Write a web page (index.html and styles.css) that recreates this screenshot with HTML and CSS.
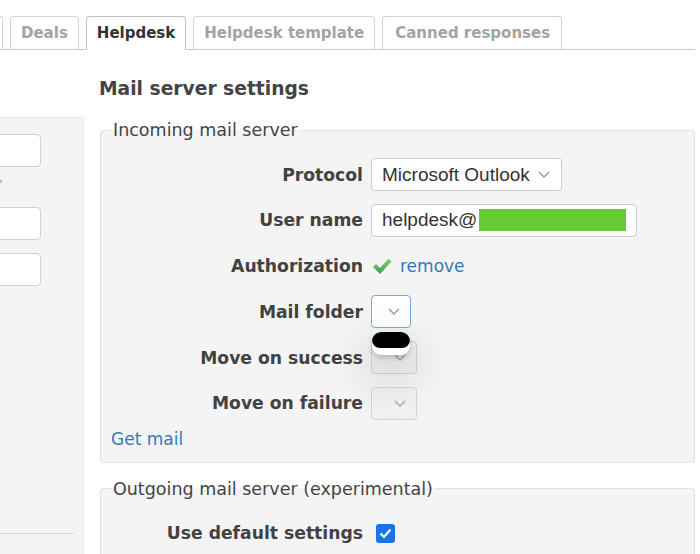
FILE: index.html
```html
<!DOCTYPE html>
<html lang="en">
<head>
<meta charset="utf-8">
<title>Helpdesk settings</title>
<link rel="stylesheet" href="styles.css">
</head>
<body>
<div class="tabs">
  <div class="tab stub"></div>
  <div class="tab">Deals</div>
  <div class="tab active">Helpdesk</div>
  <div class="tab">Helpdesk template</div>
  <div class="tab canned">Canned responses</div>
</div>
<div class="main">
  <aside class="side">
    <div class="side-input"></div>
    <span class="side-link"></span>
    <div class="side-input"></div>
    <div class="side-input third"></div>
    <hr class="side-rule">
  </aside>
  <section class="content">
    <h2 class="title">Mail server settings</h2>
    <fieldset class="box">
      <legend>Incoming mail server</legend>
      <div class="form">
        <label class="lbl">Protocol</label>
        <div class="ctl">
          <div class="select protocol"><span>Microsoft Outlook</span><svg class="chev" width="12" height="7" viewBox="0 0 12 7"><polyline points="1,1 6,6 11,1" fill="none" stroke="#999" stroke-width="1.4"/></svg></div>
        </div>
        <label class="lbl">User name</label>
        <div class="ctl">
          <div class="textin"><span>helpdesk@</span><span class="redact"></span></div>
        </div>
        <label class="lbl">Authorization</label>
        <div class="ctl auth">
          <svg class="check" width="20" height="19" viewBox="0 0 20 19"><defs><linearGradient id="g" x1="0" y1="0" x2="0" y2="1"><stop offset="0" stop-color="#7fd27f"/><stop offset="1" stop-color="#3f9f3f"/></linearGradient></defs><polygon points="1,10 4,7 8,11 16.5,1.5 19.5,4.5 8,17" fill="url(#g)"/></svg>
          <a class="link">remove</a>
        </div>
        <label class="lbl">Mail folder</label>
        <div class="ctl mfwrap">
          <div class="select small focus"><svg class="chev" width="12" height="7" viewBox="0 0 12 7"><polyline points="1,1 6,6 11,1" fill="none" stroke="#999" stroke-width="1.4"/></svg></div>
          <div class="popup"><div class="pill"></div></div>
        </div>
        <label class="lbl">Move on success</label>
        <div class="ctl">
          <div class="select wide dis"><svg class="chev" width="12" height="7" viewBox="0 0 12 7"><polyline points="1,1 6,6 11,1" fill="none" stroke="#aaa" stroke-width="1.4"/></svg></div>
        </div>
        <label class="lbl">Move on failure</label>
        <div class="ctl">
          <div class="select wide dis"><svg class="chev" width="12" height="7" viewBox="0 0 12 7"><polyline points="1,1 6,6 11,1" fill="none" stroke="#aaa" stroke-width="1.4"/></svg></div>
        </div>
      </div>
      <a class="link getmail">Get mail</a>
    </fieldset>
    <fieldset class="box outgoing">
      <legend>Outgoing mail server (experimental)</legend>
      <div class="form">
        <label class="lbl">Use default settings</label>
        <div class="ctl">
          <span class="cb"><svg width="19" height="19" viewBox="0 0 19 19"><polyline points="4.5,9.5 8,13 14.5,5.5" fill="none" stroke="#fff" stroke-width="2.2"/></svg></span>
        </div>
      </div>
    </fieldset>
  </section>
</div>
</body>
</html>
```
FILE: styles.css
```css
* { box-sizing: border-box; }
html, body { margin: 0; height: 100%; overflow: hidden; background: #fff; }
body { font-family: "DejaVu Sans", Verdana, sans-serif; color: #444; width: 700px; height: 554px; }

.tabs {
  display: flex;
  align-items: flex-end;
  gap: 7px;
  width: 695px;
  height: 50px;
  padding-top: 16px;
  border-bottom: 1px solid #c9c9c9;
}
.tab {
  height: 33px;
  padding: 0 10px;
  border: 1px solid #d3d3d3;
  border-bottom: 0;
  border-radius: 4px 4px 0 0;
  background: #fff;
  font-size: 15px;
  font-weight: bold;
  line-height: 32px;
  color: #a3a3a3;
  white-space: nowrap;
}
.tab.stub { width: 3px; padding: 0; border-left: 0; border-radius: 0 4px 0 0; }
.tab.active { color: #333; border-color: #c2c2c2; height: 34px; margin-bottom: -1px; }
.tab.canned { padding: 0 11px 0 12px; }

.main { display: flex; gap: 16px; width: 695px; height: 504px; overflow: hidden; }

.side {
  flex: none;
  width: 94px;
  height: 437px;
  margin: 67px 0 0 -10px;
  padding: 16px 42px 0 0;
  background: #f4f4f4;
  border-top: 1px solid #e6e6e6;
  border-right: 1px solid #e6e6e6;
  border-top-right-radius: 4px;
  display: flex;
  flex-direction: column;
}
.side-input { height: 33px; background: #fff; border: 1px solid #d0d0d0; border-radius: 4px; }
.side-input.third { margin-top: 13px; }
.side-link { align-self: flex-start; width: 2px; height: 3px; margin: 13px 0 24px 10px; background: #a9c7e8; }
.side-rule { align-self: flex-start; width: 74px; height: 0; margin: 247px 0 0 10px; border: 0; border-top: 1px solid #d6d6d6; }

.content { flex: 1; min-width: 0; padding-top: 27px; }
.title { margin: 0 0 20px -1px; font-size: 18.7px; line-height: 23px; font-weight: bold; color: #444; }

.box {
  margin: 0;
  min-width: 0;
  padding: 18px 10px 13px 10px;
  border: 1px solid #e1e1e1;
  border-radius: 4px;
  background: #f4f4f4;
}
.box legend { padding: 0 2px; font-size: 17.5px; line-height: 20px; color: #444; }
.outgoing { margin-top: 16px; }

.form {
  display: grid;
  grid-template-columns: 252px max-content;
  grid-auto-rows: 33px;
  column-gap: 8px;
  row-gap: 12.8px;
  align-items: center;
}
.lbl { font-size: 17.2px; font-weight: bold; line-height: 20px; text-align: right; color: #424242; white-space: nowrap; }
.ctl { display: flex; align-items: center; }

.select {
  height: 33px;
  display: flex;
  align-items: center;
  justify-content: flex-end;
  border: 1px solid #ccc;
  border-radius: 4px;
  background: #fff;
  font-family: "Liberation Sans", Arial, sans-serif;
  font-size: 19px;
  color: #333;
}
.select.protocol { width: 191px; padding: 0 11px 0 10px; justify-content: space-between; }
.select.small { width: 40px; padding-right: 10px; }
.select.wide { width: 46px; padding-right: 10px; }
.select.focus { border-color: #79aadb; }
.select.dis { background: #f1f1f1; border-color: #d3d3d3; }
.chev { display: block; flex: none; }

.textin {
  width: 266px;
  height: 33px;
  display: flex;
  align-items: center;
  padding-left: 10px;
  border: 1px solid #ccc;
  border-radius: 4px;
  background: #fff;
  font-family: "Liberation Sans", Arial, sans-serif;
  font-size: 19px;
  color: #333;
}
.redact { width: 147px; height: 22px; margin-left: 2px; background: #66cc33; }

.auth { gap: 8px; padding-left: 1px; }
.check { display: block; }
.link { font-size: 17px; line-height: 20px; color: #337ab7; text-decoration: none; }
.getmail { display: block; margin-top: 9px; }

.mfwrap { position: relative; }
.popup {
  position: absolute;
  left: 1px;
  top: 37px;
  width: 38px;
  height: 23px;
  background: #fff;
  border-radius: 9px;
  overflow: hidden;
  box-shadow: 0 3px 5px rgba(0,0,0,0.18), 0 18px 40px 12px rgba(0,0,0,0.1);
}
.pill { height: 16px; background: #000; border-radius: 8px; }

.cb { display: block; width: 19px; height: 19px; margin-left: 5px; background: #1a73e8; border-radius: 3px; }
.cb svg { display: block; }
```
